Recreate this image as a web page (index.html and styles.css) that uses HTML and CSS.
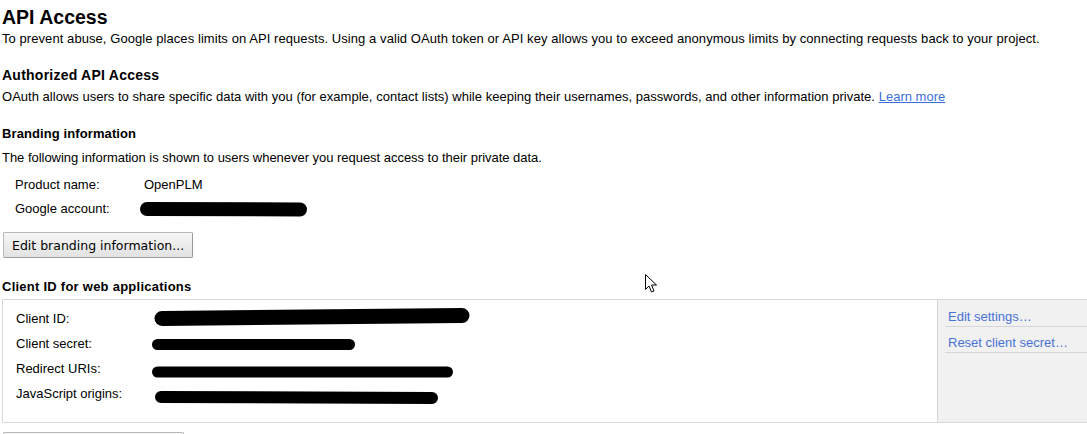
FILE: index.html
```html
<!DOCTYPE html>
<html>
<head>
<meta charset="utf-8">
<title>API Access</title>
<link rel="stylesheet" href="styles.css">
</head>
<body>
<div class="page">
  <h1 class="title">API Access</h1>
  <p class="text t-intro">To prevent abuse, Google places limits on API requests. Using a valid OAuth token or API key allows you to exceed anonymous limits by connecting requests back to your project.</p>

  <h2 class="heading h-auth">Authorized API Access</h2>
  <p class="text t-auth">OAuth allows users to share specific data with you (for example, contact lists) while keeping their usernames, passwords, and other information private. <a class="link" href="#">Learn more</a></p>

  <h3 class="heading h-brand">Branding information</h3>
  <p class="text t-brand">The following information is shown to users whenever you request access to their private data.</p>

  <div class="brand-list">
    <div class="brand-row"><span class="brand-label">Product name:</span><span class="brand-value">OpenPLM</span></div>
    <div class="brand-row"><span class="brand-label">Google account:</span><svg class="redact redact-account" width="170" height="24" viewBox="0 0 170 24"><path d="M7 12 L160 12.5" /></svg></div>
  </div>

  <button class="btn btn-brand" type="button">Edit branding information...</button>

  <h3 class="heading h-client">Client ID for web applications</h3>
  <div class="client-box">
    <div class="client-main">
      <div class="client-row"><span class="client-label">Client ID:</span><svg class="redact" width="330" height="25" viewBox="0 0 330 25"><path class="thick" d="M12 12.5 L312 9.5" /></svg></div>
      <div class="client-row"><span class="client-label">Client secret:</span><svg class="redact" width="330" height="25" viewBox="0 0 330 25"><path class="mid" d="M7.5 13.5 L199.5 13.5" /></svg></div>
      <div class="client-row"><span class="client-label">Redirect URIs:</span><svg class="redact" width="330" height="25" viewBox="0 0 330 25"><path class="mid" d="M7.5 16 L297.5 16" /></svg></div>
      <div class="client-row"><span class="client-label">JavaScript origins:</span><svg class="redact" width="330" height="25" viewBox="0 0 330 25"><path class="js" d="M11 16 L282 17" /></svg></div>
    </div>
    <div class="client-side">
      <a class="side-link" href="#">Edit settings…</a>
      <a class="side-link" href="#">Reset client secret…</a>
    </div>
  </div>

  <button class="btn btn-create" type="button">Create another client ID...</button>
</div>

<svg class="cursor" width="14" height="22" viewBox="0 0 14 22">
  <path d="M1.5 1.5 L1.5 16.5 L5 13 L7.5 19 L10 18 L7.5 12 L12.5 12 Z" fill="#fff" stroke="#000" stroke-width="1" stroke-linejoin="miter"/>
</svg>
</body>
</html>
```

FILE: styles.css
```css
html, body {
  margin: 0;
  padding: 0;
  overflow: hidden;
  background: #fff;
}

body {
  font-family: "Liberation Sans", Arial, sans-serif;
  font-size: 13px;
  color: #000;
  position: relative;
  width: 1087px;
  height: 434px;
}

.page {
  padding-left: 2px;
}

.title {
  margin: 5px 0 0;
  font-size: 19.5px;
  line-height: 24px;
  font-weight: bold;
}

.text {
  margin: 2px 0 0;
  line-height: 16px;
}

.t-intro {
  letter-spacing: 0.07px;
}

.heading {
  margin: 0;
  font-size: 13px;
  line-height: 17px;
  font-weight: bold;
}

.h-auth {
  margin-top: 20px;
  font-size: 14px;
  letter-spacing: 0.24px;
}

.t-auth {
  margin-top: 5px;
  letter-spacing: 0.02px;
}

.h-brand {
  margin-top: 20px;
  letter-spacing: 0.1px;
}

.t-brand {
  margin-top: 8px;
  letter-spacing: -0.03px;
}

.link {
  color: #3d6fdc;
  text-decoration: underline;
}

.brand-list {
  margin-top: 7px;
  padding-left: 13px;
}

.brand-row {
  display: flex;
  align-items: flex-start;
  height: 24px;
  line-height: 24px;
}

.brand-label {
  width: 129px;
  flex: none;
}

.redact path {
  fill: none;
  stroke: #000;
  stroke-linecap: round;
}

.redact-account {
  margin-left: -4px;
  display: block;
}

.redact-account path {
  stroke-width: 14;
}

.btn {
  display: block;
  font-family: "DejaVu Sans", Verdana, sans-serif;
  font-size: 12.5px;
  color: #000;
  border: 1px solid #b8b8b8;
  border-right-color: #9a9a9a;
  border-bottom-color: #9a9a9a;
  border-radius: 2px;
  background: linear-gradient(#f6f6f6, #e2e2e2);
  padding: 0 8px;
  margin: 0 0 0 1px;
}

.btn-brand {
  margin-top: 11px;
  height: 26px;
}

.h-client {
  margin-top: 20px;
  letter-spacing: 0.25px;
}

.client-box {
  margin-top: 4px;
  margin-right: -40px;
  border: 1px solid #d9d9d9;
  display: flex;
}

.client-main {
  width: 934px;
  flex: none;
  padding: 6px 0 16px 13px;
  box-sizing: border-box;
}

.client-row {
  display: flex;
  height: 25px;
  line-height: 25px;
}

.client-label {
  width: 134px;
  flex: none;
}

.redact {
  display: block;
}

.redact .thick {
  stroke-width: 15;
}

.redact .mid {
  stroke-width: 11;
}

.redact .js {
  stroke-width: 12;
}

.client-side {
  flex: 1;
  background: #f1f1f1;
  border-left: 1px solid #d4d4d4;
  padding: 1px 0 0 7px;
  display: flex;
  flex-direction: column;
}

.side-link {
  display: block;
  color: #4a72d6;
  text-decoration: none;
  padding: 7px 0 0 3px;
  line-height: 18px;
  border-bottom: 1px solid #d6d6d6;
}

.btn-create {
  margin-top: 9px;
  height: 26px;
  width: 181px;
  padding: 0;
}

.cursor {
  position: absolute;
  left: 644px;
  top: 273px;
}
```
